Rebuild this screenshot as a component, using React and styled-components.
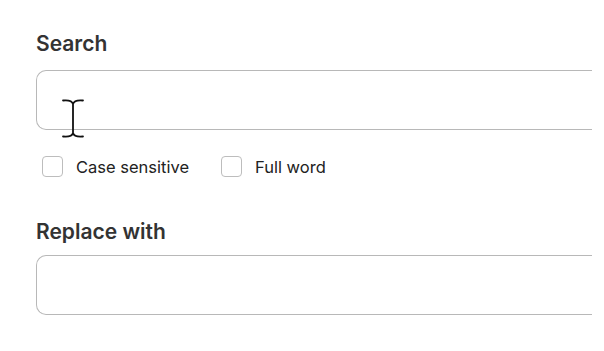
import React from "react";
import styled, { createGlobalStyle } from "styled-components";

const Global = createGlobalStyle`
  html, body { margin: 0; padding: 0; background: #fff; }
  body { font-family: Inter, "Noto Sans", Arial, sans-serif; }
`;

const Page = styled.div`
  width: 604px;
  height: 351px;
  box-sizing: border-box;
  padding: 31px 0 0 36px;
  overflow: hidden;
`;

const Label = styled.div`
  font-size: 21px;
  line-height: 25px;
  font-weight: 600;
  color: #333;
  margin-top: ${(p) => p.$mt || 0}px;
`;

const Field = styled.div`
  position: relative;
  margin-top: ${(p) => p.$mt || 0}px;
`;

const Input = styled.div`
  box-sizing: border-box;
  width: 556px;
  height: 60px;
  border: 1.5px solid #b8b8b8;
  border-right: none;
  border-radius: 10px 0 0 10px;
  background: #fff;
`;

const Cursor = styled.svg`
  position: absolute;
  left: 26px;
  top: 29px;
  width: 22px;
  height: 39px;
`;

const Options = styled.div`
  display: flex;
  align-items: center;
  gap: 32px;
  margin-top: 26px;
  padding-left: 6px;
`;

const Option = styled.label`
  display: flex;
  align-items: center;
  gap: 13px;
  font-size: 16.5px;
  line-height: 20px;
  color: #222;
`;

const Box = styled.span`
  box-sizing: border-box;
  width: 21px;
  height: 21px;
  border: 1.5px solid #bdbdbd;
  border-radius: 4px;
  background: #fff;
`;

export default function App() {
  return (
    <>
      <Global />
      <Page>
        <Label>Search</Label>
        <Field $mt={14}>
          <Input />
          <Cursor viewBox="0 0 22 39" fill="none">
            <path
              d="M1 1.5 C6 1, 10 1.5, 11 5 C12 1.5, 16 1, 21 1.5 M11 5 L11 34 M1 37.5 C6 38, 10 37.5, 11 34 C12 37.5, 16 38, 21 37.5"
              stroke="#111"
              strokeWidth="1.8"
              strokeLinecap="round"
            />
          </Cursor>
        </Field>
        <Options>
          <Option>
            <Box />
            Case sensitive
          </Option>
          <Option>
            <Box />
            Full word
          </Option>
        </Options>
        <Label $mt={42}>Replace with</Label>
        <Field $mt={11}>
          <Input />
        </Field>
      </Page>
    </>
  );
}
